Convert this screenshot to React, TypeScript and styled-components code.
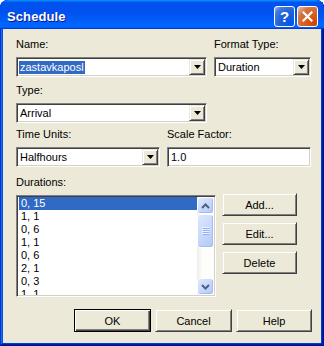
import React from "react";
import styled, { createGlobalStyle, css } from "styled-components";

const GlobalStyle = createGlobalStyle`
  html, body { margin: 0; padding: 0; background: #ffffff; }
  body { font-family: "Liberation Sans", Arial, sans-serif; font-size: 11px; color: #000; }
  * { box-sizing: border-box; }
`;

const Window = styled.div`
  width: 324px;
  height: 346px;
  display: flex;
  flex-direction: column;
  background: #0054e3;
  border-radius: 8px 8px 0 0;
  overflow: hidden;
  box-shadow: inset -1px -1px #00138c, inset 1px 1px #0831d9, inset -2px -2px #001ea0,
    inset 2px 2px #166aee, inset -3px -3px #003bda, inset 3px 3px #0855dd;
`;

const TitleBar = styled.div`
  height: 29px;
  flex: none;
  display: flex;
  align-items: center;
  padding: 3px 6px 0 7px;
  background: linear-gradient(180deg, #0997ff, #0053ee 8%, #0050ee 40%, #0066ff 88%, #0066ff 93%, #005bff 95%, #003dd7 96%, #003dd7);
  border-radius: 8px 8px 0 0;
`;

const Title = styled.div`
  flex: 1;
  font-family: "Liberation Sans", Arial, sans-serif;
  font-weight: bold;
  font-size: 13px;
  color: #ffffff;
  text-shadow: 1px 1px #0f1089;
  letter-spacing: 0.1px;
`;

const TitleButtons = styled.div`
  display: flex;
  gap: 2px;
`;

const TitleButton = styled.div<{ $kind: "help" | "close" }>`
  width: 21px;
  height: 21px;
  border: 1px solid #ffffff;
  border-radius: 3px;
  display: flex;
  align-items: center;
  justify-content: center;
  color: #ffffff;
  font-family: "Liberation Sans", Arial, sans-serif;
  font-weight: bold;
  font-size: 15px;
  ${(p) =>
    p.$kind === "help"
      ? css`
          background: radial-gradient(circle at 90% 90%, #0054e9 0%, #2263d5 55%, #4479e4 80%, #a3bbec 100%);
        `
      : css`
          background: radial-gradient(circle at 90% 90%, #cc4600 0%, #dc6527 55%, #cd7546 70%, #f0c3ad 100%);
        `}
`;

const Client = styled.div`
  flex: 1;
  margin: 0 3px 3px 3px;
  background: #ece9d8;
  padding: 9px 10px 10px 13px;
  display: flex;
  flex-direction: column;
`;

const FieldGrid = styled.div<{ $cols: string; $top?: number }>`
  display: grid;
  grid-template-columns: ${(p) => p.$cols};
  column-gap: 7px;
  row-gap: 6px;
  margin-top: ${(p) => p.$top ?? 0}px;
`;

const Label = styled.div`
  font-size: 11px;
  line-height: 13px;
  height: 13px;
  white-space: nowrap;
`;

const sunken = css`
  border: 1px solid;
  border-color: #808080 #ffffff #ffffff #808080;
  box-shadow: inset 1px 1px #404040, inset -1px -1px #d4d0c8;
  background: #ffffff;
`;

const raised = css`
  background: #ece9d8;
  border: 1px solid;
  border-color: #ece9d8 #404040 #404040 #ece9d8;
  box-shadow: inset 1px 1px #ffffff, inset -1px -1px #808080;
`;

const Field = styled.div`
  ${sunken};
  height: 20px;
  display: flex;
  align-items: center;
  padding: 1px;
`;

const FieldText = styled.div`
  flex: 1;
  padding-left: 2px;
  font-size: 11px;
  line-height: 13px;
  white-space: nowrap;
  overflow: hidden;
`;

const Selection = styled.span`
  background: #316ac5;
  color: #ffffff;
  padding: 0 1px 0 1px;
  margin-left: -1px;
  display: inline-block;
  line-height: 13px;
`;

const DropButton = styled.div`
  ${raised};
  width: 16px;
  height: 16px;
  flex: none;
  display: flex;
  align-items: center;
  justify-content: center;
`;

const Arrow = () => (
  <svg width="7" height="4" viewBox="0 0 7 4">
    <polygon points="0,0 7,0 3.5,4" fill="#000" />
  </svg>
);

const Combo = ({ children }: { children: React.ReactNode }) => (
  <Field>
    <FieldText>{children}</FieldText>
    <DropButton>
      <Arrow />
    </DropButton>
  </Field>
);

const ListRow = styled.div`
  display: grid;
  grid-template-columns: 200px 75px;
  column-gap: 6px;
  row-gap: 6px;
  margin-top: 9px;
`;

const ListBox = styled.div`
  ${sunken};
  height: 102px;
  padding: 1px;
  display: flex;
`;

const Items = styled.div`
  flex: 1;
  overflow: hidden;
  padding-left: 1px;
`;

const Item = styled.div<{ $selected?: boolean }>`
  height: 13px;
  line-height: 13px;
  font-size: 11px;
  padding-left: 2px;
  white-space: nowrap;
  background: ${(p) => (p.$selected ? "#316ac5" : "transparent")};
  color: ${(p) => (p.$selected ? "#ffffff" : "#000000")};
`;

const ScrollBar = styled.div`
  width: 17px;
  flex: none;
  display: flex;
  flex-direction: column;
  background: linear-gradient(to right, #eeede5, #fdfdfa 30%, #fdfdfa);
`;

const xpBlue = css`
  border: 1px solid #ffffff;
  border-radius: 3px;
  background: linear-gradient(135deg, #dfe8fd 0%, #c9d8fc 50%, #b4c8f6 100%);
  box-shadow: inset -1px -1px #a5bcef;
`;

const ScrollButton = styled.div`
  ${xpBlue};
  height: 17px;
  flex: none;
  display: flex;
  align-items: center;
  justify-content: center;
`;

const Thumb = styled.div`
  ${xpBlue};
  height: 34px;
  flex: none;
  display: flex;
  align-items: center;
  justify-content: center;
`;

const Track = styled.div`
  flex: 1;
`;

const Chevron = ({ up }: { up?: boolean }) => (
  <svg width="9" height="6" viewBox="0 0 9 6">
    <polyline
      points={up ? "1,5 4.5,1.5 8,5" : "1,1 4.5,4.5 8,1"}
      fill="none"
      stroke="#4d6185"
      strokeWidth="2"
    />
  </svg>
);

const Grip = () => (
  <svg width="7" height="8" viewBox="0 0 7 8">
    {[0, 2, 4, 6].map((y) => (
      <g key={y}>
        <rect x="0" y={y} width="7" height="1" fill="#eef4fe" />
        <rect x="1" y={y + 1} width="7" height="1" fill="#8cb0f8" />
      </g>
    ))}
  </svg>
);

const ButtonColumn = styled.div`
  display: flex;
  flex-direction: column;
  gap: 6px;
  margin-top: -2px;
`;

const PushButton = styled.div<{ $default?: boolean; $w?: number }>`
  ${raised};
  width: ${(p) => p.$w ?? 75}px;
  height: 23px;
  display: flex;
  align-items: center;
  justify-content: center;
  font-size: 11px;
  ${(p) =>
    p.$default &&
    css`
      border-color: #000000;
      box-shadow: inset 1px 1px #ffffff, inset -1px -1px #404040, inset -2px -2px #808080;
    `}
`;

const Footer = styled.div`
  display: flex;
  justify-content: flex-end;
  gap: 4px;
  margin-top: 12px;
  margin-right: -1px;
`;

const durations = ["0, 15", "1, 1", "0, 6", "1, 1", "0, 6", "2, 1", "0, 3", "1, 1"];

export default function App() {
  return (
    <>
      <GlobalStyle />
      <Window>
        <TitleBar>
          <Title>Schedule</Title>
          <TitleButtons>
            <TitleButton $kind="help">?</TitleButton>
            <TitleButton $kind="close">
              <svg width="11" height="11" viewBox="0 0 11 11">
                <path d="M1.5 1.5 L9.5 9.5 M9.5 1.5 L1.5 9.5" stroke="#fff" strokeWidth="2.2" strokeLinecap="square" />
              </svg>
            </TitleButton>
          </TitleButtons>
        </TitleBar>
        <Client>
          <FieldGrid $cols="191px 97px">
            <Label>Name:</Label>
            <Label>Format Type:</Label>
            <Combo>
              <Selection>zastavkaposl</Selection>
            </Combo>
            <Combo>Duration</Combo>
          </FieldGrid>
          <FieldGrid $cols="191px 97px" $top={7}>
            <Label>Type:</Label>
            <div />
            <Combo>Arrival</Combo>
          </FieldGrid>
          <FieldGrid $cols="144px 144px" $top={5}>
            <Label>Time Units:</Label>
            <Label>Scale Factor:</Label>
            <Combo>Halfhours</Combo>
            <Field>
              <FieldText>1.0</FieldText>
            </Field>
          </FieldGrid>
          <ListRow>
            <Label>Durations:</Label>
            <div />
            <ListBox>
              <Items>
                {durations.map((d, i) => (
                  <Item key={i} $selected={i === 0}>
                    {d}
                  </Item>
                ))}
              </Items>
              <ScrollBar>
                <ScrollButton>
                  <Chevron up />
                </ScrollButton>
                <Thumb>
                  <Grip />
                </Thumb>
                <Track />
                <ScrollButton>
                  <Chevron />
                </ScrollButton>
              </ScrollBar>
            </ListBox>
            <ButtonColumn>
              <PushButton>Add...</PushButton>
              <PushButton>Edit...</PushButton>
              <PushButton>Delete</PushButton>
            </ButtonColumn>
          </ListRow>
          <Footer>
            <PushButton $default $w={77}>OK</PushButton>
            <PushButton $w={77}>Cancel</PushButton>
            <PushButton $w={76}>Help</PushButton>
          </Footer>
        </Client>
      </Window>
    </>
  );
}
